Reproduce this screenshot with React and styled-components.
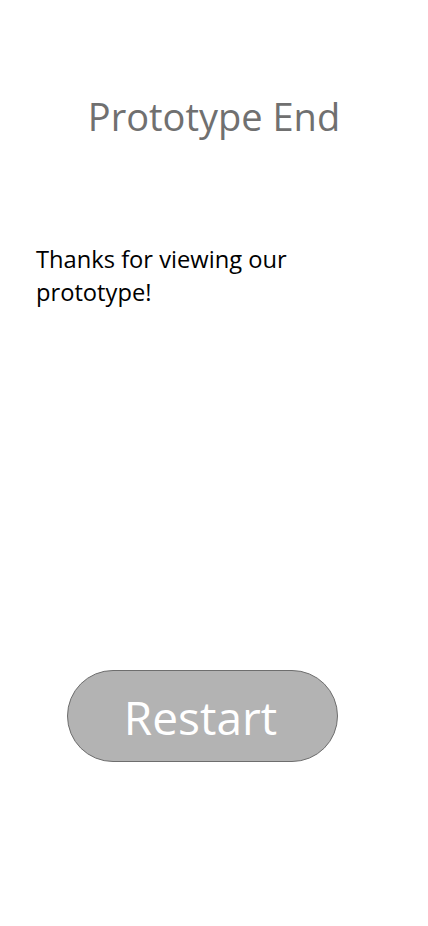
import styled, { createGlobalStyle } from 'styled-components';

const GlobalStyle = createGlobalStyle`
  html, body {
    margin: 0;
    padding: 0;
    background: #ffffff;
  }
  body {
    font-family: "Open Sans", "Noto Sans", sans-serif;
  }
`

const Screen = styled.div`
  width: 428px;
  height: 926px;
  display: flex;
  flex-direction: column;
  background: #ffffff;
`

const Title = styled.h1`
  margin: 93px 0 0;
  text-align: center;
  font-size: 38px;
  font-weight: 400;
  line-height: 46px;
  color: #707070;
`

const Message = styled.p`
  margin: 104px 0 0 36px;
  width: 290px;
  font-size: 23.7px;
  line-height: 33px;
  color: #000000;
`

const RestartButton = styled.button`
  margin: 361px 0 0 67px;
  width: 271px;
  height: 92px;
  border: 1px solid #6e6e6e;
  border-radius: 46px;
  background: #b3b3b3;
  color: #ffffff;
  font-family: inherit;
  font-size: 46px;
  line-height: 1;
  padding: 2px 4px 0 0;
  cursor: pointer;
`

export default function App() {
  return (
    <>
      <GlobalStyle />
      <Screen>
        <Title>Prototype End</Title>
        <Message>Thanks for viewing our prototype!</Message>
        <RestartButton>Restart</RestartButton>
      </Screen>
    </>
  );
}
